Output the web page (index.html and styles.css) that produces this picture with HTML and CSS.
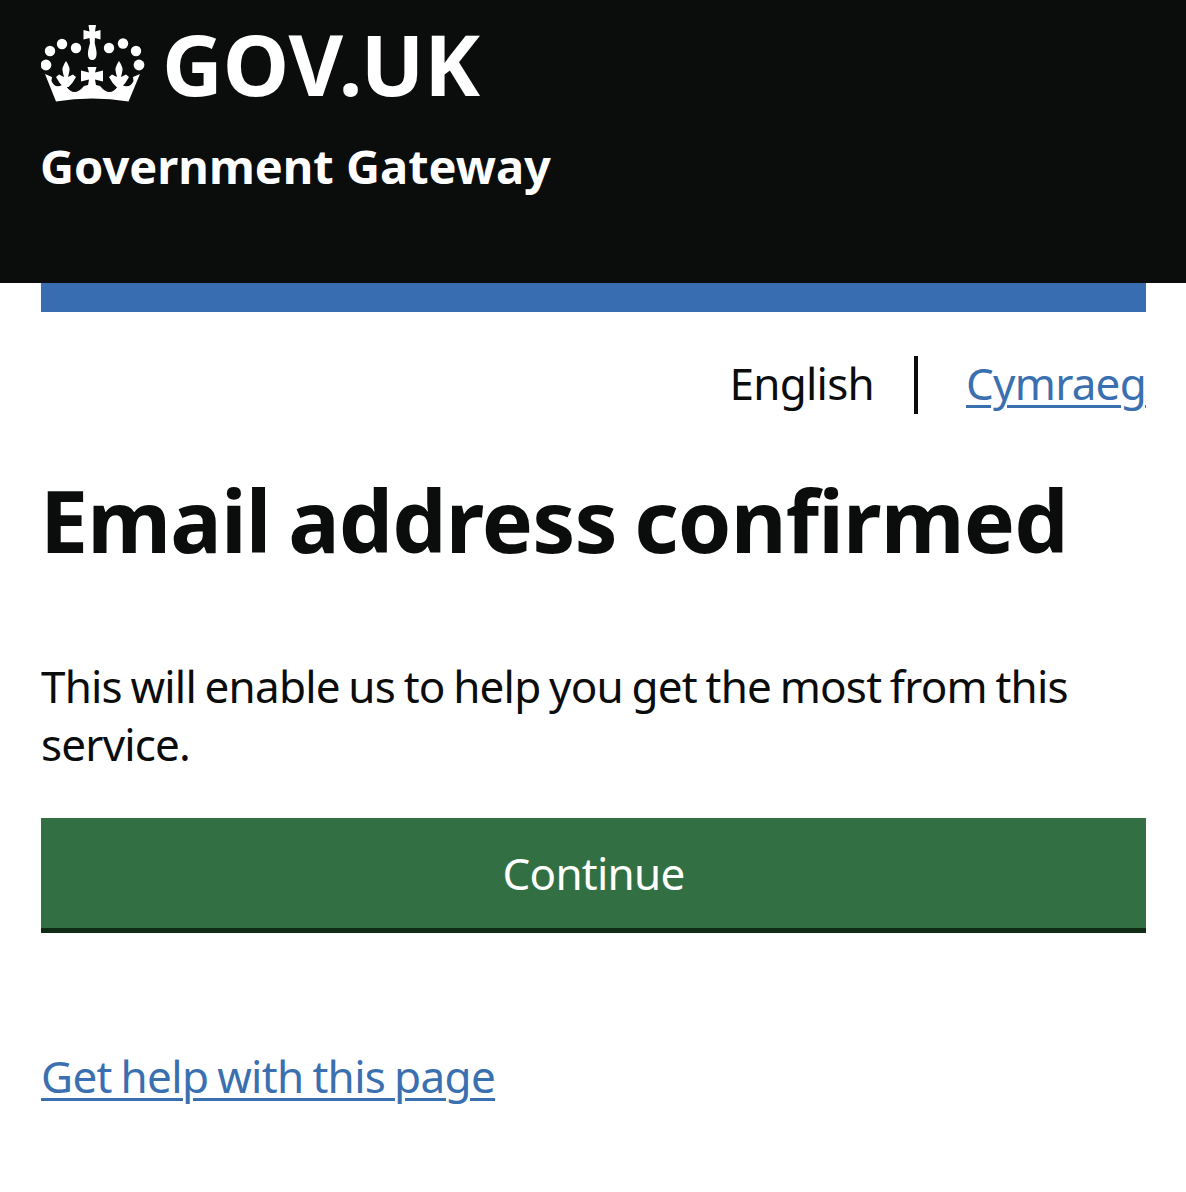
FILE: index.html
```html
<!DOCTYPE html>
<html lang="en">
	<head>
		<meta charset="UTF-8">
		<title>Email address confirmed</title>
		<link rel="stylesheet" href="styles.css">
	</head>
	<body>
		<header class="site-header">
			<div class="logo">
				<svg class="crown" viewBox="41 25 105 77" width="105" height="77" aria-hidden="true">
					<g fill="#fff">
						<circle cx="50" cy="51" r="5.2"/>
						<circle cx="62" cy="44" r="5.2"/>
						<circle cx="76" cy="48" r="5.2"/>
						<circle cx="109" cy="48" r="5.2"/>
						<circle cx="123" cy="43.5" r="5.2"/>
						<circle cx="136" cy="51" r="5.2"/>
						<circle cx="46" cy="65" r="5.4"/>
						<circle cx="139" cy="65" r="5.4"/>
						<!-- top cross and orb -->
						<path d="M88.500 25H96L95 31.500 100.500 30V39.500L95 38 94.700 43Q97 52 96.500 55 96 60 92.300 60 88.500 60 88 55 87.500 52 90 43L89.500 38 83.500 39.500V30L89.500 31.500Z"/>
						<!-- band -->
						<path d="M45 74L52 77 51.500 81Q55 89 62 85L66 86Q74 98 84 86L92 84 100 86Q110 98 118 86L122 85Q130 89 133.500 81L133 77 140 74 128.500 101.500Q92 95.500 56 101.500Z"/>
						<!-- fleurs -->
						<path d="M66 61Q71 68 69 73L68 77 73 74.500 76 77Q73 83 68.500 87H63.500Q59 83 56 77L59 74.500 64 77 63 73Q61 68 66 61Z"/>
						<path d="M119 61Q124 68 122 73L121 77 126 74.500 129 77Q126 83 121.500 87H116.500Q112 83 109 77L112 74.500 117 77 116 73Q114 68 119 61Z"/>
						<!-- middle cross -->
						<path d="M87.500 67H96.500L95 72.500 103 70.500V81.500L95 79.500 96.500 88H87.500L89 79.500 81 81.500V70.500L89 72.500Z"/>
					</g>
				</svg>
				<span class="logo-text">GOV.UK</span>
			</div>
			<div class="service-name">Government Gateway</div>
		</header>
		<div class="wrapper">
			<div class="blue-bar"></div>
			<ul class="lang-nav">
				<li class="lang-current">English</li>
				<li><a href="#">Cymraeg</a></li>
			</ul>
			<h1 class="page-title">Email address confirmed</h1>
			<p class="body-text">This will enable us to help you get the most from this service.</p>
			<a class="button" href="#">Continue</a>
			<a class="help-link" href="#">Get help with this page</a>
		</div>
	</body>
</html>
```

FILE: styles.css
```css
*{
	margin:0;
	padding:0;
	box-sizing:border-box;
}
html,body{
	width:100%;
	background:#fff;
}
body{
	font-family:"Noto Sans","Liberation Sans",sans-serif;
	color:#0b0c0c;
}
a{
	color:#3a6fb0;
	text-underline-offset:5px;
	text-decoration-thickness:3px;
}
.site-header{
	height:283px;
	padding:25px 41px 0;
	background:#0b0c0c;
	color:#fff;
}
.logo{
	display:flex;
	align-items:center;
	height:77px;
}
.crown{
	display:block;
	flex-shrink:0;
}
.logo-text{
	margin-left:16px;
	font-size:84px;
	font-weight:700;
	line-height:77px;
}
.service-name{
	margin-top:36px;
	margin-left:-1px;
	font-size:47px;
	font-weight:700;
	line-height:56px;
}
.wrapper{
	padding:0 40px 0 41px;
}
.blue-bar{
	height:29px;
	background:#386db1;
}
.lang-nav{
	display:flex;
	justify-content:flex-end;
	align-items:center;
	margin-top:44px;
	list-style:none;
	font-size:44px;
	line-height:54px;
	letter-spacing:-.75px;
}
.lang-nav li{
	padding-bottom:4px;
}
.lang-nav .lang-current{
	padding-right:40px;
	border-right:4px solid #0b0c0c;
	margin-right:48px;
}
.page-title{
	margin-top:58px;
	margin-left:-1px;
	font-size:86px;
	font-weight:700;
	line-height:96px;
	letter-spacing:-.85px;
	word-spacing:-4px;
}
.body-text{
	margin-top:89px;
	font-size:44px;
	line-height:58px;
	letter-spacing:-.8px;
	word-spacing:-2px;
}
.button{
	display:block;
	height:115px;
	margin-top:45px;
	background:#327044;
	border-bottom:5px solid #102c17;
	color:#fff;
	font-size:44px;
	line-height:110px;
	letter-spacing:-.75px;
	text-align:center;
	text-decoration:none;
}
.help-link{
	display:inline-block;
	margin-top:114px;
	font-size:44px;
	line-height:58px;
	letter-spacing:-.65px;
	word-spacing:-2px;
}
```
